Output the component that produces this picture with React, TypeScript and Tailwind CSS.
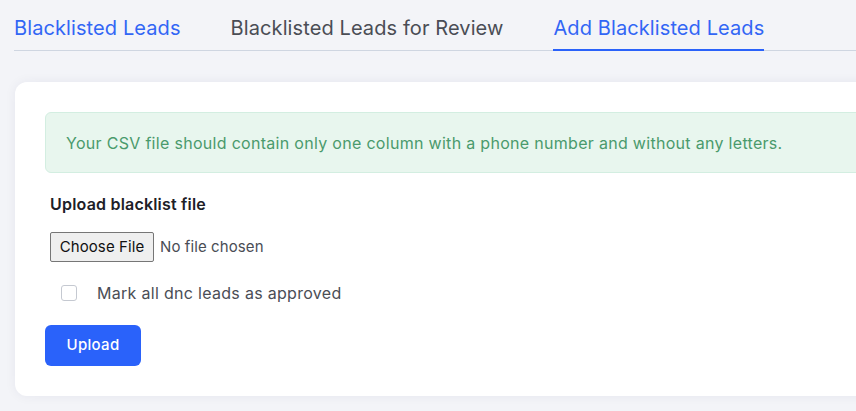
import React, { useState } from 'react';

type TabKey = 'list' | 'review' | 'add';

const tabs: { key: TabKey; label: string }[] = [
  { key: 'list', label: 'Blacklisted Leads' },
  { key: 'review', label: 'Blacklisted Leads for Review' },
  { key: 'add', label: 'Add Blacklisted Leads' },
];

const App: React.FC = () => {
  const [active, setActive] = useState<TabKey>('add');
  const [approved, setApproved] = useState(false);

  return (
    <div className="min-h-screen w-full overflow-hidden bg-[#f3f4f8] pl-[14px] pt-[14px] font-['Inter','Noto_Sans',sans-serif]">
      <nav className="flex border-b border-[#cfd6e1]">
        {tabs.map(tab => {
          const isActive = tab.key === active;
          return (
            <button
              key={tab.key}
              onClick={() => setActive(tab.key)}
              className={`mr-[50px] -mb-px pb-[7px] text-[20px] leading-[28px] tracking-[0.1px] ${
                isActive
                  ? 'border-b-2 border-[#2a62fa] text-[#3266f5]'
                  : tab.key === 'list'
                    ? 'border-b-2 border-transparent text-[#3266f5]'
                    : 'border-b-2 border-transparent text-[#4a4d55]'
              }`}
            >
              {tab.label}
            </button>
          );
        })}
      </nav>

      <section className="mt-[31px] ml-px w-[900px] rounded-[12px] bg-white px-[30px] pt-[30px] pb-[30px] shadow-[0_0_12px_rgba(30,40,80,0.06)]">
        <div className="flex h-[61px] items-center rounded-[6px] border border-[#d3eee1] bg-[#e8f6ee] px-[20px] text-[16px] tracking-[0.3px] text-[#4a9a6c]">
          Your CSV file should contain only one column with a phone number and without any letters.
        </div>

        <div className="px-[5px]">
          <p className="mt-[20px] text-[16px] font-semibold leading-[22px] tracking-[0.2px] text-[#1d2027]">Upload blacklist file</p>

          <div className="mt-[17px] flex items-center">
            <label className="flex h-[30px] w-[104px] cursor-pointer items-center justify-center rounded-[2px] border border-[#767676] bg-[#efefef] text-[15px] tracking-[0.1px] text-[#111]">
              Choose File
              <input type="file" accept=".csv" className="hidden" />
            </label>
            <span className="ml-[6px] text-[15px] tracking-[0.1px] text-[#4a4d55]">No file chosen</span>
          </div>

          <label className="mt-[14px] flex h-[34px] cursor-pointer items-center pl-[11px]">
            <input
              type="checkbox"
              checked={approved}
              onChange={e => setApproved(e.target.checked)}
              className="-mt-[1px] h-[16px] w-[16px] appearance-none rounded-[3px] border border-[#c5c9d1] bg-white checked:border-[#2a62fa] checked:bg-[#2a62fa]"
            />
            <span className="ml-[20px] text-[16px] tracking-[0.3px] text-[#4a4d55]">Mark all dnc leads as approved</span>
          </label>
        </div>

        <button className="mt-[15px] h-[41px] w-[96px] rounded-[6px] bg-[#2a62fa] text-[15px] font-medium tracking-[0.3px] text-white">
          Upload
        </button>
      </section>
    </div>
  );
};

export default App;
